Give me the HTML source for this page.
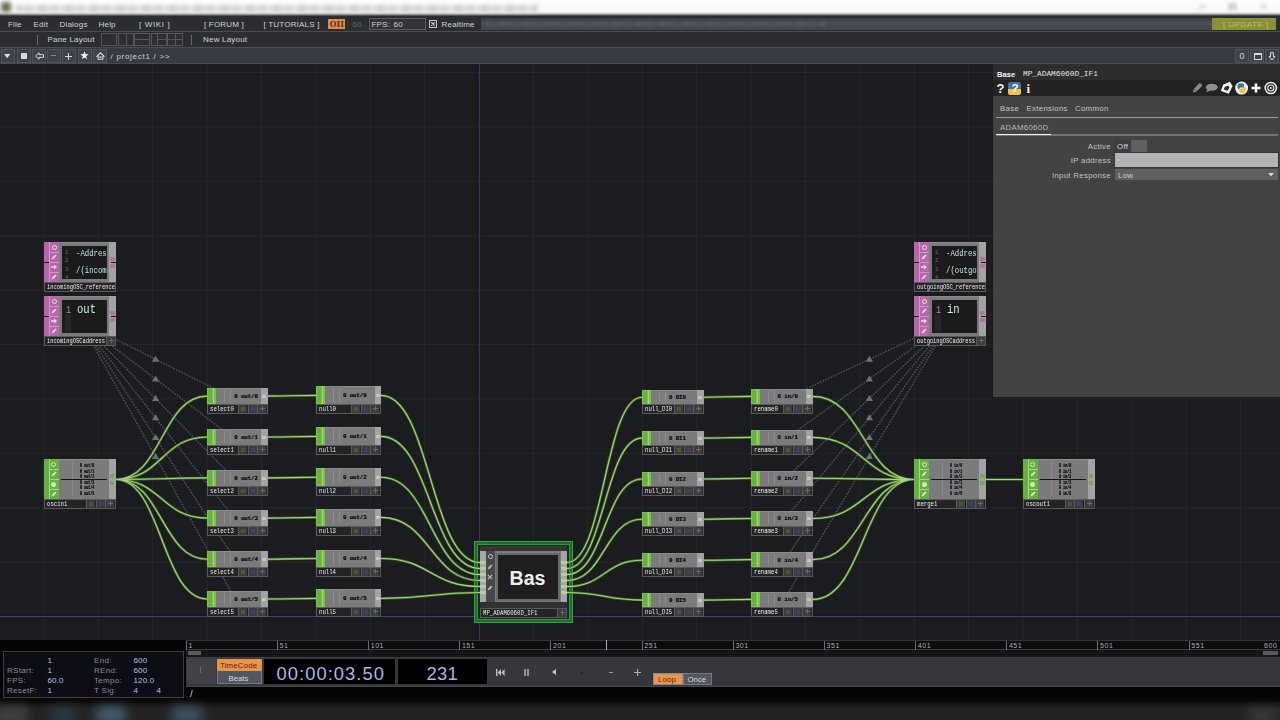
<!DOCTYPE html><html><head><meta charset="utf-8"><title>TouchDesigner</title><style>
*{box-sizing:border-box;margin:0;padding:0}
html,body{width:1280px;height:720px;overflow:hidden;background:#1b1c20}
body{font-family:"Liberation Sans",sans-serif;position:relative;color:#ccc}
.abs{position:absolute}
#root{position:absolute;left:0;top:0;width:1280px;height:720px;overflow:hidden;background:#1b1c20}
.t{position:absolute;white-space:nowrap;line-height:1}
.mono{font-family:"Liberation Mono",monospace}.sx{transform-origin:0 0}
/* top bars */
#titlebar{left:0;top:0;width:1280px;height:16px;overflow:hidden;background:linear-gradient(#fdfdfd 0,#f8f8f8 11.5px,#e0e0e0 13px,#8a8a8c 14.6px,#2c2d31 16px)}
#menubar{left:0;top:16px;width:1280px;height:16px;background:#2c2d31;border-bottom:1px solid #4c4d53}
#panebar{left:0;top:32px;width:1280px;height:16px;background:#2c2d31;border-bottom:1px solid #4c4d53}
#pathbar{left:0;top:48px;width:1280px;height:16px;background:#383a41;border-bottom:1px solid #484a53}
.mi{font-size:8px;color:#d4d4d4;top:4.7px;letter-spacing:.2px}
.pb{position:absolute;top:.5px;height:14px;width:13px;border:1px solid #50535b;background:#3f4249}
/* nodes */
.node{position:absolute}
.chop .flag{position:absolute;left:0;top:0;width:9px;background:#78c24c}
.nbody{position:absolute;background:#7b7b7b}
.nright{position:absolute;background:#a3a3a3}
.nlabel{position:absolute;left:0;height:10px;border:1px solid #5a5a5a;background:#242427;overflow:hidden}
.nlabel .nm{position:absolute;left:2px;top:1.3px;font-family:"Liberation Mono",monospace;font-size:7px;color:#ececec;line-height:7px;white-space:nowrap;transform-origin:0 0;transform:scaleX(.83);display:block}
.nb{position:absolute;top:0;width:9px;height:8px;border-left:1px solid #5a5a5a;background:#3c3c3e}
.nb i{position:absolute;left:2px;top:2px;width:4px;height:4px;display:block}
.val{position:absolute;font-family:"Liberation Mono",monospace;font-weight:bold;font-size:5.6px;color:#101010;line-height:6px;white-space:nowrap;text-shadow:0 0 .6px #222}

/* param panel */
#pp{left:993px;top:64px;width:287px;height:332.5px;background:#434343}
#pphead{left:0;top:0;width:287px;height:32.2px;background:linear-gradient(#2d2d2d 0,#2d2d2d 15.5px,#232323 16.5px,#232323 100%)}
.pl{font-size:7.8px;color:#c4c4c4;letter-spacing:.32px}
/* timeline */
#tl{left:0;top:640px;width:1280px;height:58px;background:#050404}
#tlinfo{left:2.5px;top:11px;width:181px;height:46.5px;border:1px solid #3e3e42;background:#0d0d15}
.il{font-size:8px;color:#8c8c8c;letter-spacing:.3px}
.iv{font-size:8px;color:#b4c0ee;letter-spacing:.15px}
#ruler{left:186px;top:0;width:1094px;height:9.5px;background:#0c0c0e;border-bottom:1px solid #3c3c40;border-top:1px solid #35353a}
.rt{position:absolute;top:0;width:1px;height:9px;background:#6e6e70}
.rn{position:absolute;top:.7px;font-size:7px;color:#b0b0b0;line-height:7px;letter-spacing:.55px}
#tlscroll{left:186px;top:9.5px;width:1094px;height:7px;background:#151517}
#tlctl{left:186px;top:16.5px;width:1094px;height:30.5px;background:#36373b;border-bottom:1px solid #46474a;border-top:1px solid #3e3f43}#tlctl>div.in{position:absolute;left:0;top:-2.5px}
#taskbar{left:0;top:697.5px;width:1280px;height:22.5px;overflow:hidden;background:linear-gradient(#0a0605 0,#0c0807 3px,#191818 7px,#212121 11px,#232323 22px)}
</style></head><body><div id="root"><svg class="abs" style="left:0;top:64px" width="1280" height="576" viewBox="0 64 1280 576"><rect x="43.3" y="64" width="1" height="576" fill="#25262c"/><rect x="97.7" y="64" width="1" height="576" fill="#25262c"/><rect x="152.1" y="64" width="1" height="576" fill="#25262c"/><rect x="206.5" y="64" width="1" height="576" fill="#25262c"/><rect x="260.9" y="64" width="1" height="576" fill="#25262c"/><rect x="315.3" y="64" width="1" height="576" fill="#25262c"/><rect x="369.7" y="64" width="1" height="576" fill="#25262c"/><rect x="424.1" y="64" width="1" height="576" fill="#25262c"/><rect x="532.9" y="64" width="1" height="576" fill="#25262c"/><rect x="587.3" y="64" width="1" height="576" fill="#25262c"/><rect x="641.7" y="64" width="1" height="576" fill="#25262c"/><rect x="696.1" y="64" width="1" height="576" fill="#25262c"/><rect x="750.5" y="64" width="1" height="576" fill="#25262c"/><rect x="804.9" y="64" width="1" height="576" fill="#25262c"/><rect x="859.3" y="64" width="1" height="576" fill="#25262c"/><rect x="913.7" y="64" width="1" height="576" fill="#25262c"/><rect x="968.1" y="64" width="1" height="576" fill="#25262c"/><rect x="1022.5" y="64" width="1" height="576" fill="#25262c"/><rect x="1076.9" y="64" width="1" height="576" fill="#25262c"/><rect x="1131.3" y="64" width="1" height="576" fill="#25262c"/><rect x="1185.7" y="64" width="1" height="576" fill="#25262c"/><rect x="1240.1" y="64" width="1" height="576" fill="#25262c"/><rect x="0" y="72.0" width="1280" height="1" fill="#25262c"/><rect x="0" y="126.4" width="1280" height="1" fill="#25262c"/><rect x="0" y="180.8" width="1280" height="1" fill="#25262c"/><rect x="0" y="235.2" width="1280" height="1" fill="#25262c"/><rect x="0" y="289.6" width="1280" height="1" fill="#25262c"/><rect x="0" y="344.0" width="1280" height="1" fill="#25262c"/><rect x="0" y="398.4" width="1280" height="1" fill="#25262c"/><rect x="0" y="452.8" width="1280" height="1" fill="#25262c"/><rect x="0" y="507.2" width="1280" height="1" fill="#25262c"/><rect x="0" y="561.6" width="1280" height="1" fill="#25262c"/><rect x="476.8" y="64" width="3.4" height="576" fill="#14132c" opacity=".55"/><rect x="0" y="614.7" width="1280" height="3.6" fill="#14132c" opacity=".55"/><rect x="478.8" y="64" width="1.1" height="576" fill="#3d3d52"/><rect x="0" y="616.0" width="1280" height="1.1" fill="#44445e"/></svg><div class="abs" style="left:474px;top:540.5px;width:98.5px;height:82px;background:#1f6a2c;border:1.2px solid #35a544"></div><div class="abs" style="left:477px;top:543.5px;width:92.5px;height:76px;background:#1a2a1e;border:1px solid #2f9a3c"></div><svg class="abs" style="left:0;top:64px" width="1280" height="576" viewBox="0 64 1280 576" fill="none"><path d="M80.0 321.5L237.5 400.2M950.0 321.5L782.0 400.2M80.0 321.5L237.5 441.2M950.0 321.5L782.0 441.2M80.0 321.5L237.5 482.1M950.0 321.5L782.0 482.1M80.0 321.5L237.5 522.3M950.0 321.5L782.0 522.3M80.0 321.5L237.5 563.4M950.0 321.5L782.0 563.4M80.0 321.5L237.5 603.2M950.0 321.5L782.0 603.2" stroke="#4c5058" stroke-width="1.55" stroke-dasharray="1.6 1.3"/><path d="M155.6 355.7L159.2 361.7L152.0 361.7Z" fill="#6a717d"/><path d="M869.4 355.7L873.0 361.7L865.8 361.7Z" fill="#6a717d"/><path d="M155.6 375.4L159.2 381.4L152.0 381.4Z" fill="#6a717d"/><path d="M869.4 375.4L873.0 381.4L865.8 381.4Z" fill="#6a717d"/><path d="M155.6 395.0L159.2 401.0L152.0 401.0Z" fill="#6a717d"/><path d="M869.4 395.0L873.0 401.0L865.8 401.0Z" fill="#6a717d"/><path d="M155.6 414.3L159.2 420.3L152.0 420.3Z" fill="#6a717d"/><path d="M869.4 414.3L873.0 420.3L865.8 420.3Z" fill="#6a717d"/><path d="M155.6 434.0L159.2 440.0L152.0 440.0Z" fill="#6a717d"/><path d="M869.4 434.0L873.0 440.0L865.8 440.0Z" fill="#6a717d"/><path d="M155.6 453.1L159.2 459.1L152.0 459.1Z" fill="#6a717d"/><path d="M869.4 453.1L873.0 459.1L865.8 459.1Z" fill="#6a717d"/><path d="M116.0 479.5C161.7 479.5 161.7 396.1 207.3 396.1M267.8 396.1C291.9 396.1 291.9 395.4 316.0 395.4M381.0 395.4C430.5 395.4 430.5 562.5 480.0 562.5M567.0 562.5C604.5 562.5 604.5 397.2 642.0 397.2M703.7 397.2C727.2 397.2 727.2 396.4 750.6 396.4M813.0 396.4C863.5 396.4 863.5 479.5 914.0 479.5M116.0 479.5C161.7 479.5 161.7 437.0 207.3 437.0M267.8 437.0C291.9 437.0 291.9 436.4 316.0 436.4M381.0 436.4C430.5 436.4 430.5 568.5 480.0 568.5M567.0 568.5C604.5 568.5 604.5 438.1 642.0 438.1M703.7 438.1C727.2 438.1 727.2 437.4 750.6 437.4M813.0 437.4C863.5 437.4 863.5 479.5 914.0 479.5M116.0 479.5C161.7 479.5 161.7 477.9 207.3 477.9M267.8 477.9C291.9 477.9 291.9 477.3 316.0 477.3M381.0 477.3C430.5 477.3 430.5 574.5 480.0 574.5M567.0 574.5C604.5 574.5 604.5 479.0 642.0 479.0M703.7 479.0C727.2 479.0 727.2 478.3 750.6 478.3M813.0 478.3C863.5 478.3 863.5 479.5 914.0 479.5M116.0 479.5C161.7 479.5 161.7 518.1 207.3 518.1M267.8 518.1C291.9 518.1 291.9 517.4 316.0 517.4M381.0 517.4C430.5 517.4 430.5 580.5 480.0 580.5M567.0 580.5C604.5 580.5 604.5 519.2 642.0 519.2M703.7 519.2C727.2 519.2 727.2 518.5 750.6 518.5M813.0 518.5C863.5 518.5 863.5 479.5 914.0 479.5M116.0 479.5C161.7 479.5 161.7 559.2 207.3 559.2M267.8 559.2C291.9 559.2 291.9 558.5 316.0 558.5M381.0 558.5C430.5 558.5 430.5 586.5 480.0 586.5M567.0 586.5C604.5 586.5 604.5 560.3 642.0 560.3M703.7 560.3C727.2 560.3 727.2 559.6 750.6 559.6M813.0 559.6C863.5 559.6 863.5 479.5 914.0 479.5M116.0 479.5C161.7 479.5 161.7 599.0 207.3 599.0M267.8 599.0C291.9 599.0 291.9 598.4 316.0 598.4M381.0 598.4C430.5 598.4 430.5 592.5 480.0 592.5M567.0 592.5C604.5 592.5 604.5 600.1 642.0 600.1M703.7 600.1C727.2 600.1 727.2 599.4 750.6 599.4M813.0 599.4C863.5 599.4 863.5 479.5 914.0 479.5M985.5 479.5C1004.0 479.5 1004.0 479.5 1022.5 479.5" stroke="#416c27" stroke-width="2.5" stroke-linecap="round"/><path d="M116.0 479.5C161.7 479.5 161.7 396.1 207.3 396.1M267.8 396.1C291.9 396.1 291.9 395.4 316.0 395.4M381.0 395.4C430.5 395.4 430.5 562.5 480.0 562.5M567.0 562.5C604.5 562.5 604.5 397.2 642.0 397.2M703.7 397.2C727.2 397.2 727.2 396.4 750.6 396.4M813.0 396.4C863.5 396.4 863.5 479.5 914.0 479.5M116.0 479.5C161.7 479.5 161.7 437.0 207.3 437.0M267.8 437.0C291.9 437.0 291.9 436.4 316.0 436.4M381.0 436.4C430.5 436.4 430.5 568.5 480.0 568.5M567.0 568.5C604.5 568.5 604.5 438.1 642.0 438.1M703.7 438.1C727.2 438.1 727.2 437.4 750.6 437.4M813.0 437.4C863.5 437.4 863.5 479.5 914.0 479.5M116.0 479.5C161.7 479.5 161.7 477.9 207.3 477.9M267.8 477.9C291.9 477.9 291.9 477.3 316.0 477.3M381.0 477.3C430.5 477.3 430.5 574.5 480.0 574.5M567.0 574.5C604.5 574.5 604.5 479.0 642.0 479.0M703.7 479.0C727.2 479.0 727.2 478.3 750.6 478.3M813.0 478.3C863.5 478.3 863.5 479.5 914.0 479.5M116.0 479.5C161.7 479.5 161.7 518.1 207.3 518.1M267.8 518.1C291.9 518.1 291.9 517.4 316.0 517.4M381.0 517.4C430.5 517.4 430.5 580.5 480.0 580.5M567.0 580.5C604.5 580.5 604.5 519.2 642.0 519.2M703.7 519.2C727.2 519.2 727.2 518.5 750.6 518.5M813.0 518.5C863.5 518.5 863.5 479.5 914.0 479.5M116.0 479.5C161.7 479.5 161.7 559.2 207.3 559.2M267.8 559.2C291.9 559.2 291.9 558.5 316.0 558.5M381.0 558.5C430.5 558.5 430.5 586.5 480.0 586.5M567.0 586.5C604.5 586.5 604.5 560.3 642.0 560.3M703.7 560.3C727.2 560.3 727.2 559.6 750.6 559.6M813.0 559.6C863.5 559.6 863.5 479.5 914.0 479.5M116.0 479.5C161.7 479.5 161.7 599.0 207.3 599.0M267.8 599.0C291.9 599.0 291.9 598.4 316.0 598.4M381.0 598.4C430.5 598.4 430.5 592.5 480.0 592.5M567.0 592.5C604.5 592.5 604.5 600.1 642.0 600.1M703.7 600.1C727.2 600.1 727.2 599.4 750.6 599.4M813.0 599.4C863.5 599.4 863.5 479.5 914.0 479.5M985.5 479.5C1004.0 479.5 1004.0 479.5 1022.5 479.5" stroke="#a8d27c" stroke-width="1.1" stroke-linecap="round"/></svg><div class="node chop" style="left:207.3px;top:387.8px;width:60.5px;height:26.0px"><div class="flag" style="height:16.0px"></div><div class="abs" style="left:1px;top:1px;width:4px;height:14.0px;background:#6ab040"></div><div class="abs" style="left:6px;top:0;width:1px;height:16.0px;background:#9ad86a"></div><div class="nbody" style="left:9px;top:0;width:45.0px;height:16.0px;border-top:1px solid #8a8a8a"></div><div class="abs" style="left:17px;top:2px;width:1px;height:12.0px;background:#8d8d8d"></div><div class="abs" style="left:23px;top:2px;width:1px;height:12.0px;background:#8d8d8d"></div><div class="val" style="left:27px;top:6.0px">0 out/0</div><div class="nright" style="left:54.0px;top:0;width:6.5px;height:16.0px"></div><div class="abs" style="left:55.0px;top:7.0px;width:4px;height:3px;background:#c4c4c4"></div><div class="nlabel" style="top:16.0px;width:60.5px"><span class="nm" style="transform:scaleX(0.810)">select0</span><div class="nb" style="left:29.7px"><i style="background:#48593a"></i></div><div class="nb" style="left:39.3px"><i style="background:#39446a"></i></div><div class="nb" style="left:48.9px"><i style="left:2px;top:3px;width:5px;height:1px;background:#6a6a6a"></i><i style="left:4px;top:1px;width:1px;height:5px;background:#6a6a6a"></i></div></div></div><div class="node chop" style="left:316.0px;top:386.4px;width:65.0px;height:27.3px"><div class="flag" style="height:17.3px"></div><div class="abs" style="left:1px;top:1px;width:4px;height:15.3px;background:#6ab040"></div><div class="abs" style="left:6px;top:0;width:1px;height:17.3px;background:#9ad86a"></div><div class="nbody" style="left:9px;top:0;width:49.5px;height:17.3px;border-top:1px solid #8a8a8a"></div><div class="abs" style="left:17px;top:2px;width:1px;height:13.3px;background:#8d8d8d"></div><div class="abs" style="left:23px;top:2px;width:1px;height:13.3px;background:#8d8d8d"></div><div class="val" style="left:27px;top:6.7px">0 out/0</div><div class="nright" style="left:58.5px;top:0;width:6.5px;height:17.3px"></div><div class="abs" style="left:59.5px;top:7.7px;width:4px;height:3px;background:#c4c4c4"></div><div class="nlabel" style="top:17.3px;width:65.0px"><span class="nm" style="transform:scaleX(0.810)">null0</span><div class="nb" style="left:34.2px"><i style="background:#48593a"></i></div><div class="nb" style="left:43.8px"><i style="background:#39446a"></i></div><div class="nb" style="left:53.4px"><i style="left:2px;top:3px;width:5px;height:1px;background:#6a6a6a"></i><i style="left:4px;top:1px;width:1px;height:5px;background:#6a6a6a"></i></div></div></div><div class="node chop" style="left:642.0px;top:389.9px;width:61.7px;height:23.8px"><div class="flag" style="height:13.8px"></div><div class="abs" style="left:1px;top:1px;width:4px;height:11.8px;background:#6ab040"></div><div class="abs" style="left:6px;top:0;width:1px;height:13.8px;background:#9ad86a"></div><div class="nbody" style="left:9px;top:0;width:46.2px;height:13.8px;border-top:1px solid #8a8a8a"></div><div class="abs" style="left:17px;top:2px;width:1px;height:9.8px;background:#8d8d8d"></div><div class="abs" style="left:23px;top:2px;width:1px;height:9.8px;background:#8d8d8d"></div><div class="val" style="left:27px;top:4.9px">0 DI0</div><div class="nright" style="left:55.2px;top:0;width:6.5px;height:13.8px"></div><div class="abs" style="left:56.2px;top:5.9px;width:4px;height:3px;background:#c4c4c4"></div><div class="nlabel" style="top:13.8px;width:61.7px"><span class="nm" style="transform:scaleX(0.810)">null_DI0</span><div class="nb" style="left:30.9px"><i style="background:#48593a"></i></div><div class="nb" style="left:40.5px"><i style="background:#39446a"></i></div><div class="nb" style="left:50.1px"><i style="left:2px;top:3px;width:5px;height:1px;background:#6a6a6a"></i><i style="left:4px;top:1px;width:1px;height:5px;background:#6a6a6a"></i></div></div></div><div class="node chop" style="left:750.6px;top:389.1px;width:62.4px;height:24.6px"><div class="flag" style="height:14.6px"></div><div class="abs" style="left:1px;top:1px;width:4px;height:12.6px;background:#6ab040"></div><div class="abs" style="left:6px;top:0;width:1px;height:14.6px;background:#9ad86a"></div><div class="nbody" style="left:9px;top:0;width:46.9px;height:14.6px;border-top:1px solid #8a8a8a"></div><div class="abs" style="left:17px;top:2px;width:1px;height:10.6px;background:#8d8d8d"></div><div class="abs" style="left:23px;top:2px;width:1px;height:10.6px;background:#8d8d8d"></div><div class="val" style="left:27px;top:5.3px">0 in/0</div><div class="nright" style="left:55.9px;top:0;width:6.5px;height:14.6px"></div><div class="abs" style="left:56.9px;top:6.3px;width:4px;height:3px;background:#c4c4c4"></div><div class="nlabel" style="top:14.6px;width:62.4px"><span class="nm" style="transform:scaleX(0.810)">rename0</span><div class="nb" style="left:31.6px"><i style="background:#48593a"></i></div><div class="nb" style="left:41.2px"><i style="background:#39446a"></i></div><div class="nb" style="left:50.8px"><i style="left:2px;top:3px;width:5px;height:1px;background:#6a6a6a"></i><i style="left:4px;top:1px;width:1px;height:5px;background:#6a6a6a"></i></div></div></div><div class="node chop" style="left:207.3px;top:428.7px;width:60.5px;height:26.0px"><div class="flag" style="height:16.0px"></div><div class="abs" style="left:1px;top:1px;width:4px;height:14.0px;background:#6ab040"></div><div class="abs" style="left:6px;top:0;width:1px;height:16.0px;background:#9ad86a"></div><div class="nbody" style="left:9px;top:0;width:45.0px;height:16.0px;border-top:1px solid #8a8a8a"></div><div class="abs" style="left:17px;top:2px;width:1px;height:12.0px;background:#8d8d8d"></div><div class="abs" style="left:23px;top:2px;width:1px;height:12.0px;background:#8d8d8d"></div><div class="val" style="left:27px;top:6.0px">0 out/1</div><div class="nright" style="left:54.0px;top:0;width:6.5px;height:16.0px"></div><div class="abs" style="left:55.0px;top:7.0px;width:4px;height:3px;background:#c4c4c4"></div><div class="nlabel" style="top:16.0px;width:60.5px"><span class="nm" style="transform:scaleX(0.810)">select1</span><div class="nb" style="left:29.7px"><i style="background:#48593a"></i></div><div class="nb" style="left:39.3px"><i style="background:#39446a"></i></div><div class="nb" style="left:48.9px"><i style="left:2px;top:3px;width:5px;height:1px;background:#6a6a6a"></i><i style="left:4px;top:1px;width:1px;height:5px;background:#6a6a6a"></i></div></div></div><div class="node chop" style="left:316.0px;top:427.4px;width:65.0px;height:27.3px"><div class="flag" style="height:17.3px"></div><div class="abs" style="left:1px;top:1px;width:4px;height:15.3px;background:#6ab040"></div><div class="abs" style="left:6px;top:0;width:1px;height:17.3px;background:#9ad86a"></div><div class="nbody" style="left:9px;top:0;width:49.5px;height:17.3px;border-top:1px solid #8a8a8a"></div><div class="abs" style="left:17px;top:2px;width:1px;height:13.3px;background:#8d8d8d"></div><div class="abs" style="left:23px;top:2px;width:1px;height:13.3px;background:#8d8d8d"></div><div class="val" style="left:27px;top:6.7px">0 out/1</div><div class="nright" style="left:58.5px;top:0;width:6.5px;height:17.3px"></div><div class="abs" style="left:59.5px;top:7.7px;width:4px;height:3px;background:#c4c4c4"></div><div class="nlabel" style="top:17.3px;width:65.0px"><span class="nm" style="transform:scaleX(0.810)">null1</span><div class="nb" style="left:34.2px"><i style="background:#48593a"></i></div><div class="nb" style="left:43.8px"><i style="background:#39446a"></i></div><div class="nb" style="left:53.4px"><i style="left:2px;top:3px;width:5px;height:1px;background:#6a6a6a"></i><i style="left:4px;top:1px;width:1px;height:5px;background:#6a6a6a"></i></div></div></div><div class="node chop" style="left:642.0px;top:430.9px;width:61.7px;height:23.8px"><div class="flag" style="height:13.8px"></div><div class="abs" style="left:1px;top:1px;width:4px;height:11.8px;background:#6ab040"></div><div class="abs" style="left:6px;top:0;width:1px;height:13.8px;background:#9ad86a"></div><div class="nbody" style="left:9px;top:0;width:46.2px;height:13.8px;border-top:1px solid #8a8a8a"></div><div class="abs" style="left:17px;top:2px;width:1px;height:9.8px;background:#8d8d8d"></div><div class="abs" style="left:23px;top:2px;width:1px;height:9.8px;background:#8d8d8d"></div><div class="val" style="left:27px;top:4.9px">0 DI1</div><div class="nright" style="left:55.2px;top:0;width:6.5px;height:13.8px"></div><div class="abs" style="left:56.2px;top:5.9px;width:4px;height:3px;background:#c4c4c4"></div><div class="nlabel" style="top:13.8px;width:61.7px"><span class="nm" style="transform:scaleX(0.810)">null_DI1</span><div class="nb" style="left:30.9px"><i style="background:#48593a"></i></div><div class="nb" style="left:40.5px"><i style="background:#39446a"></i></div><div class="nb" style="left:50.1px"><i style="left:2px;top:3px;width:5px;height:1px;background:#6a6a6a"></i><i style="left:4px;top:1px;width:1px;height:5px;background:#6a6a6a"></i></div></div></div><div class="node chop" style="left:750.6px;top:430.1px;width:62.4px;height:24.6px"><div class="flag" style="height:14.6px"></div><div class="abs" style="left:1px;top:1px;width:4px;height:12.6px;background:#6ab040"></div><div class="abs" style="left:6px;top:0;width:1px;height:14.6px;background:#9ad86a"></div><div class="nbody" style="left:9px;top:0;width:46.9px;height:14.6px;border-top:1px solid #8a8a8a"></div><div class="abs" style="left:17px;top:2px;width:1px;height:10.6px;background:#8d8d8d"></div><div class="abs" style="left:23px;top:2px;width:1px;height:10.6px;background:#8d8d8d"></div><div class="val" style="left:27px;top:5.3px">0 in/1</div><div class="nright" style="left:55.9px;top:0;width:6.5px;height:14.6px"></div><div class="abs" style="left:56.9px;top:6.3px;width:4px;height:3px;background:#c4c4c4"></div><div class="nlabel" style="top:14.6px;width:62.4px"><span class="nm" style="transform:scaleX(0.810)">rename1</span><div class="nb" style="left:31.6px"><i style="background:#48593a"></i></div><div class="nb" style="left:41.2px"><i style="background:#39446a"></i></div><div class="nb" style="left:50.8px"><i style="left:2px;top:3px;width:5px;height:1px;background:#6a6a6a"></i><i style="left:4px;top:1px;width:1px;height:5px;background:#6a6a6a"></i></div></div></div><div class="node chop" style="left:207.3px;top:469.6px;width:60.5px;height:26.0px"><div class="flag" style="height:16.0px"></div><div class="abs" style="left:1px;top:1px;width:4px;height:14.0px;background:#6ab040"></div><div class="abs" style="left:6px;top:0;width:1px;height:16.0px;background:#9ad86a"></div><div class="nbody" style="left:9px;top:0;width:45.0px;height:16.0px;border-top:1px solid #8a8a8a"></div><div class="abs" style="left:17px;top:2px;width:1px;height:12.0px;background:#8d8d8d"></div><div class="abs" style="left:23px;top:2px;width:1px;height:12.0px;background:#8d8d8d"></div><div class="val" style="left:27px;top:6.0px">0 out/2</div><div class="nright" style="left:54.0px;top:0;width:6.5px;height:16.0px"></div><div class="abs" style="left:55.0px;top:7.0px;width:4px;height:3px;background:#c4c4c4"></div><div class="nlabel" style="top:16.0px;width:60.5px"><span class="nm" style="transform:scaleX(0.810)">select2</span><div class="nb" style="left:29.7px"><i style="background:#48593a"></i></div><div class="nb" style="left:39.3px"><i style="background:#39446a"></i></div><div class="nb" style="left:48.9px"><i style="left:2px;top:3px;width:5px;height:1px;background:#6a6a6a"></i><i style="left:4px;top:1px;width:1px;height:5px;background:#6a6a6a"></i></div></div></div><div class="node chop" style="left:316.0px;top:468.3px;width:65.0px;height:27.3px"><div class="flag" style="height:17.3px"></div><div class="abs" style="left:1px;top:1px;width:4px;height:15.3px;background:#6ab040"></div><div class="abs" style="left:6px;top:0;width:1px;height:17.3px;background:#9ad86a"></div><div class="nbody" style="left:9px;top:0;width:49.5px;height:17.3px;border-top:1px solid #8a8a8a"></div><div class="abs" style="left:17px;top:2px;width:1px;height:13.3px;background:#8d8d8d"></div><div class="abs" style="left:23px;top:2px;width:1px;height:13.3px;background:#8d8d8d"></div><div class="val" style="left:27px;top:6.7px">0 out/2</div><div class="nright" style="left:58.5px;top:0;width:6.5px;height:17.3px"></div><div class="abs" style="left:59.5px;top:7.7px;width:4px;height:3px;background:#c4c4c4"></div><div class="nlabel" style="top:17.3px;width:65.0px"><span class="nm" style="transform:scaleX(0.810)">null2</span><div class="nb" style="left:34.2px"><i style="background:#48593a"></i></div><div class="nb" style="left:43.8px"><i style="background:#39446a"></i></div><div class="nb" style="left:53.4px"><i style="left:2px;top:3px;width:5px;height:1px;background:#6a6a6a"></i><i style="left:4px;top:1px;width:1px;height:5px;background:#6a6a6a"></i></div></div></div><div class="node chop" style="left:642.0px;top:471.8px;width:61.7px;height:23.8px"><div class="flag" style="height:13.8px"></div><div class="abs" style="left:1px;top:1px;width:4px;height:11.8px;background:#6ab040"></div><div class="abs" style="left:6px;top:0;width:1px;height:13.8px;background:#9ad86a"></div><div class="nbody" style="left:9px;top:0;width:46.2px;height:13.8px;border-top:1px solid #8a8a8a"></div><div class="abs" style="left:17px;top:2px;width:1px;height:9.8px;background:#8d8d8d"></div><div class="abs" style="left:23px;top:2px;width:1px;height:9.8px;background:#8d8d8d"></div><div class="val" style="left:27px;top:4.9px">0 DI2</div><div class="nright" style="left:55.2px;top:0;width:6.5px;height:13.8px"></div><div class="abs" style="left:56.2px;top:5.9px;width:4px;height:3px;background:#c4c4c4"></div><div class="nlabel" style="top:13.8px;width:61.7px"><span class="nm" style="transform:scaleX(0.810)">null_DI2</span><div class="nb" style="left:30.9px"><i style="background:#48593a"></i></div><div class="nb" style="left:40.5px"><i style="background:#39446a"></i></div><div class="nb" style="left:50.1px"><i style="left:2px;top:3px;width:5px;height:1px;background:#6a6a6a"></i><i style="left:4px;top:1px;width:1px;height:5px;background:#6a6a6a"></i></div></div></div><div class="node chop" style="left:750.6px;top:471.0px;width:62.4px;height:24.6px"><div class="flag" style="height:14.6px"></div><div class="abs" style="left:1px;top:1px;width:4px;height:12.6px;background:#6ab040"></div><div class="abs" style="left:6px;top:0;width:1px;height:14.6px;background:#9ad86a"></div><div class="nbody" style="left:9px;top:0;width:46.9px;height:14.6px;border-top:1px solid #8a8a8a"></div><div class="abs" style="left:17px;top:2px;width:1px;height:10.6px;background:#8d8d8d"></div><div class="abs" style="left:23px;top:2px;width:1px;height:10.6px;background:#8d8d8d"></div><div class="val" style="left:27px;top:5.3px">0 in/2</div><div class="nright" style="left:55.9px;top:0;width:6.5px;height:14.6px"></div><div class="abs" style="left:56.9px;top:6.3px;width:4px;height:3px;background:#c4c4c4"></div><div class="nlabel" style="top:14.6px;width:62.4px"><span class="nm" style="transform:scaleX(0.810)">rename2</span><div class="nb" style="left:31.6px"><i style="background:#48593a"></i></div><div class="nb" style="left:41.2px"><i style="background:#39446a"></i></div><div class="nb" style="left:50.8px"><i style="left:2px;top:3px;width:5px;height:1px;background:#6a6a6a"></i><i style="left:4px;top:1px;width:1px;height:5px;background:#6a6a6a"></i></div></div></div><div class="node chop" style="left:207.3px;top:509.8px;width:60.5px;height:26.0px"><div class="flag" style="height:16.0px"></div><div class="abs" style="left:1px;top:1px;width:4px;height:14.0px;background:#6ab040"></div><div class="abs" style="left:6px;top:0;width:1px;height:16.0px;background:#9ad86a"></div><div class="nbody" style="left:9px;top:0;width:45.0px;height:16.0px;border-top:1px solid #8a8a8a"></div><div class="abs" style="left:17px;top:2px;width:1px;height:12.0px;background:#8d8d8d"></div><div class="abs" style="left:23px;top:2px;width:1px;height:12.0px;background:#8d8d8d"></div><div class="val" style="left:27px;top:6.0px">0 out/3</div><div class="nright" style="left:54.0px;top:0;width:6.5px;height:16.0px"></div><div class="abs" style="left:55.0px;top:7.0px;width:4px;height:3px;background:#c4c4c4"></div><div class="nlabel" style="top:16.0px;width:60.5px"><span class="nm" style="transform:scaleX(0.810)">select3</span><div class="nb" style="left:29.7px"><i style="background:#48593a"></i></div><div class="nb" style="left:39.3px"><i style="background:#39446a"></i></div><div class="nb" style="left:48.9px"><i style="left:2px;top:3px;width:5px;height:1px;background:#6a6a6a"></i><i style="left:4px;top:1px;width:1px;height:5px;background:#6a6a6a"></i></div></div></div><div class="node chop" style="left:316.0px;top:508.5px;width:65.0px;height:27.3px"><div class="flag" style="height:17.3px"></div><div class="abs" style="left:1px;top:1px;width:4px;height:15.3px;background:#6ab040"></div><div class="abs" style="left:6px;top:0;width:1px;height:17.3px;background:#9ad86a"></div><div class="nbody" style="left:9px;top:0;width:49.5px;height:17.3px;border-top:1px solid #8a8a8a"></div><div class="abs" style="left:17px;top:2px;width:1px;height:13.3px;background:#8d8d8d"></div><div class="abs" style="left:23px;top:2px;width:1px;height:13.3px;background:#8d8d8d"></div><div class="val" style="left:27px;top:6.7px">0 out/3</div><div class="nright" style="left:58.5px;top:0;width:6.5px;height:17.3px"></div><div class="abs" style="left:59.5px;top:7.7px;width:4px;height:3px;background:#c4c4c4"></div><div class="nlabel" style="top:17.3px;width:65.0px"><span class="nm" style="transform:scaleX(0.810)">null3</span><div class="nb" style="left:34.2px"><i style="background:#48593a"></i></div><div class="nb" style="left:43.8px"><i style="background:#39446a"></i></div><div class="nb" style="left:53.4px"><i style="left:2px;top:3px;width:5px;height:1px;background:#6a6a6a"></i><i style="left:4px;top:1px;width:1px;height:5px;background:#6a6a6a"></i></div></div></div><div class="node chop" style="left:642.0px;top:512.0px;width:61.7px;height:23.8px"><div class="flag" style="height:13.8px"></div><div class="abs" style="left:1px;top:1px;width:4px;height:11.8px;background:#6ab040"></div><div class="abs" style="left:6px;top:0;width:1px;height:13.8px;background:#9ad86a"></div><div class="nbody" style="left:9px;top:0;width:46.2px;height:13.8px;border-top:1px solid #8a8a8a"></div><div class="abs" style="left:17px;top:2px;width:1px;height:9.8px;background:#8d8d8d"></div><div class="abs" style="left:23px;top:2px;width:1px;height:9.8px;background:#8d8d8d"></div><div class="val" style="left:27px;top:4.9px">0 DI3</div><div class="nright" style="left:55.2px;top:0;width:6.5px;height:13.8px"></div><div class="abs" style="left:56.2px;top:5.9px;width:4px;height:3px;background:#c4c4c4"></div><div class="nlabel" style="top:13.8px;width:61.7px"><span class="nm" style="transform:scaleX(0.810)">null_DI3</span><div class="nb" style="left:30.9px"><i style="background:#48593a"></i></div><div class="nb" style="left:40.5px"><i style="background:#39446a"></i></div><div class="nb" style="left:50.1px"><i style="left:2px;top:3px;width:5px;height:1px;background:#6a6a6a"></i><i style="left:4px;top:1px;width:1px;height:5px;background:#6a6a6a"></i></div></div></div><div class="node chop" style="left:750.6px;top:511.2px;width:62.4px;height:24.6px"><div class="flag" style="height:14.6px"></div><div class="abs" style="left:1px;top:1px;width:4px;height:12.6px;background:#6ab040"></div><div class="abs" style="left:6px;top:0;width:1px;height:14.6px;background:#9ad86a"></div><div class="nbody" style="left:9px;top:0;width:46.9px;height:14.6px;border-top:1px solid #8a8a8a"></div><div class="abs" style="left:17px;top:2px;width:1px;height:10.6px;background:#8d8d8d"></div><div class="abs" style="left:23px;top:2px;width:1px;height:10.6px;background:#8d8d8d"></div><div class="val" style="left:27px;top:5.3px">0 in/3</div><div class="nright" style="left:55.9px;top:0;width:6.5px;height:14.6px"></div><div class="abs" style="left:56.9px;top:6.3px;width:4px;height:3px;background:#c4c4c4"></div><div class="nlabel" style="top:14.6px;width:62.4px"><span class="nm" style="transform:scaleX(0.810)">rename3</span><div class="nb" style="left:31.6px"><i style="background:#48593a"></i></div><div class="nb" style="left:41.2px"><i style="background:#39446a"></i></div><div class="nb" style="left:50.8px"><i style="left:2px;top:3px;width:5px;height:1px;background:#6a6a6a"></i><i style="left:4px;top:1px;width:1px;height:5px;background:#6a6a6a"></i></div></div></div><div class="node chop" style="left:207.3px;top:550.9px;width:60.5px;height:26.0px"><div class="flag" style="height:16.0px"></div><div class="abs" style="left:1px;top:1px;width:4px;height:14.0px;background:#6ab040"></div><div class="abs" style="left:6px;top:0;width:1px;height:16.0px;background:#9ad86a"></div><div class="nbody" style="left:9px;top:0;width:45.0px;height:16.0px;border-top:1px solid #8a8a8a"></div><div class="abs" style="left:17px;top:2px;width:1px;height:12.0px;background:#8d8d8d"></div><div class="abs" style="left:23px;top:2px;width:1px;height:12.0px;background:#8d8d8d"></div><div class="val" style="left:27px;top:6.0px">0 out/4</div><div class="nright" style="left:54.0px;top:0;width:6.5px;height:16.0px"></div><div class="abs" style="left:55.0px;top:7.0px;width:4px;height:3px;background:#c4c4c4"></div><div class="nlabel" style="top:16.0px;width:60.5px"><span class="nm" style="transform:scaleX(0.810)">select4</span><div class="nb" style="left:29.7px"><i style="background:#48593a"></i></div><div class="nb" style="left:39.3px"><i style="background:#39446a"></i></div><div class="nb" style="left:48.9px"><i style="left:2px;top:3px;width:5px;height:1px;background:#6a6a6a"></i><i style="left:4px;top:1px;width:1px;height:5px;background:#6a6a6a"></i></div></div></div><div class="node chop" style="left:316.0px;top:549.6px;width:65.0px;height:27.3px"><div class="flag" style="height:17.3px"></div><div class="abs" style="left:1px;top:1px;width:4px;height:15.3px;background:#6ab040"></div><div class="abs" style="left:6px;top:0;width:1px;height:17.3px;background:#9ad86a"></div><div class="nbody" style="left:9px;top:0;width:49.5px;height:17.3px;border-top:1px solid #8a8a8a"></div><div class="abs" style="left:17px;top:2px;width:1px;height:13.3px;background:#8d8d8d"></div><div class="abs" style="left:23px;top:2px;width:1px;height:13.3px;background:#8d8d8d"></div><div class="val" style="left:27px;top:6.7px">0 out/4</div><div class="nright" style="left:58.5px;top:0;width:6.5px;height:17.3px"></div><div class="abs" style="left:59.5px;top:7.7px;width:4px;height:3px;background:#c4c4c4"></div><div class="nlabel" style="top:17.3px;width:65.0px"><span class="nm" style="transform:scaleX(0.810)">null4</span><div class="nb" style="left:34.2px"><i style="background:#48593a"></i></div><div class="nb" style="left:43.8px"><i style="background:#39446a"></i></div><div class="nb" style="left:53.4px"><i style="left:2px;top:3px;width:5px;height:1px;background:#6a6a6a"></i><i style="left:4px;top:1px;width:1px;height:5px;background:#6a6a6a"></i></div></div></div><div class="node chop" style="left:642.0px;top:553.1px;width:61.7px;height:23.8px"><div class="flag" style="height:13.8px"></div><div class="abs" style="left:1px;top:1px;width:4px;height:11.8px;background:#6ab040"></div><div class="abs" style="left:6px;top:0;width:1px;height:13.8px;background:#9ad86a"></div><div class="nbody" style="left:9px;top:0;width:46.2px;height:13.8px;border-top:1px solid #8a8a8a"></div><div class="abs" style="left:17px;top:2px;width:1px;height:9.8px;background:#8d8d8d"></div><div class="abs" style="left:23px;top:2px;width:1px;height:9.8px;background:#8d8d8d"></div><div class="val" style="left:27px;top:4.9px">0 DI4</div><div class="nright" style="left:55.2px;top:0;width:6.5px;height:13.8px"></div><div class="abs" style="left:56.2px;top:5.9px;width:4px;height:3px;background:#c4c4c4"></div><div class="nlabel" style="top:13.8px;width:61.7px"><span class="nm" style="transform:scaleX(0.810)">null_DI4</span><div class="nb" style="left:30.9px"><i style="background:#48593a"></i></div><div class="nb" style="left:40.5px"><i style="background:#39446a"></i></div><div class="nb" style="left:50.1px"><i style="left:2px;top:3px;width:5px;height:1px;background:#6a6a6a"></i><i style="left:4px;top:1px;width:1px;height:5px;background:#6a6a6a"></i></div></div></div><div class="node chop" style="left:750.6px;top:552.3px;width:62.4px;height:24.6px"><div class="flag" style="height:14.6px"></div><div class="abs" style="left:1px;top:1px;width:4px;height:12.6px;background:#6ab040"></div><div class="abs" style="left:6px;top:0;width:1px;height:14.6px;background:#9ad86a"></div><div class="nbody" style="left:9px;top:0;width:46.9px;height:14.6px;border-top:1px solid #8a8a8a"></div><div class="abs" style="left:17px;top:2px;width:1px;height:10.6px;background:#8d8d8d"></div><div class="abs" style="left:23px;top:2px;width:1px;height:10.6px;background:#8d8d8d"></div><div class="val" style="left:27px;top:5.3px">0 in/4</div><div class="nright" style="left:55.9px;top:0;width:6.5px;height:14.6px"></div><div class="abs" style="left:56.9px;top:6.3px;width:4px;height:3px;background:#c4c4c4"></div><div class="nlabel" style="top:14.6px;width:62.4px"><span class="nm" style="transform:scaleX(0.810)">rename4</span><div class="nb" style="left:31.6px"><i style="background:#48593a"></i></div><div class="nb" style="left:41.2px"><i style="background:#39446a"></i></div><div class="nb" style="left:50.8px"><i style="left:2px;top:3px;width:5px;height:1px;background:#6a6a6a"></i><i style="left:4px;top:1px;width:1px;height:5px;background:#6a6a6a"></i></div></div></div><div class="node chop" style="left:207.3px;top:590.7px;width:60.5px;height:26.0px"><div class="flag" style="height:16.0px"></div><div class="abs" style="left:1px;top:1px;width:4px;height:14.0px;background:#6ab040"></div><div class="abs" style="left:6px;top:0;width:1px;height:16.0px;background:#9ad86a"></div><div class="nbody" style="left:9px;top:0;width:45.0px;height:16.0px;border-top:1px solid #8a8a8a"></div><div class="abs" style="left:17px;top:2px;width:1px;height:12.0px;background:#8d8d8d"></div><div class="abs" style="left:23px;top:2px;width:1px;height:12.0px;background:#8d8d8d"></div><div class="val" style="left:27px;top:6.0px">0 out/5</div><div class="nright" style="left:54.0px;top:0;width:6.5px;height:16.0px"></div><div class="abs" style="left:55.0px;top:7.0px;width:4px;height:3px;background:#c4c4c4"></div><div class="nlabel" style="top:16.0px;width:60.5px"><span class="nm" style="transform:scaleX(0.810)">select5</span><div class="nb" style="left:29.7px"><i style="background:#48593a"></i></div><div class="nb" style="left:39.3px"><i style="background:#39446a"></i></div><div class="nb" style="left:48.9px"><i style="left:2px;top:3px;width:5px;height:1px;background:#6a6a6a"></i><i style="left:4px;top:1px;width:1px;height:5px;background:#6a6a6a"></i></div></div></div><div class="node chop" style="left:316.0px;top:589.4px;width:65.0px;height:27.3px"><div class="flag" style="height:17.3px"></div><div class="abs" style="left:1px;top:1px;width:4px;height:15.3px;background:#6ab040"></div><div class="abs" style="left:6px;top:0;width:1px;height:17.3px;background:#9ad86a"></div><div class="nbody" style="left:9px;top:0;width:49.5px;height:17.3px;border-top:1px solid #8a8a8a"></div><div class="abs" style="left:17px;top:2px;width:1px;height:13.3px;background:#8d8d8d"></div><div class="abs" style="left:23px;top:2px;width:1px;height:13.3px;background:#8d8d8d"></div><div class="val" style="left:27px;top:6.7px">0 out/5</div><div class="nright" style="left:58.5px;top:0;width:6.5px;height:17.3px"></div><div class="abs" style="left:59.5px;top:7.7px;width:4px;height:3px;background:#c4c4c4"></div><div class="nlabel" style="top:17.3px;width:65.0px"><span class="nm" style="transform:scaleX(0.810)">null5</span><div class="nb" style="left:34.2px"><i style="background:#48593a"></i></div><div class="nb" style="left:43.8px"><i style="background:#39446a"></i></div><div class="nb" style="left:53.4px"><i style="left:2px;top:3px;width:5px;height:1px;background:#6a6a6a"></i><i style="left:4px;top:1px;width:1px;height:5px;background:#6a6a6a"></i></div></div></div><div class="node chop" style="left:642.0px;top:592.9px;width:61.7px;height:23.8px"><div class="flag" style="height:13.8px"></div><div class="abs" style="left:1px;top:1px;width:4px;height:11.8px;background:#6ab040"></div><div class="abs" style="left:6px;top:0;width:1px;height:13.8px;background:#9ad86a"></div><div class="nbody" style="left:9px;top:0;width:46.2px;height:13.8px;border-top:1px solid #8a8a8a"></div><div class="abs" style="left:17px;top:2px;width:1px;height:9.8px;background:#8d8d8d"></div><div class="abs" style="left:23px;top:2px;width:1px;height:9.8px;background:#8d8d8d"></div><div class="val" style="left:27px;top:4.9px">0 DI5</div><div class="nright" style="left:55.2px;top:0;width:6.5px;height:13.8px"></div><div class="abs" style="left:56.2px;top:5.9px;width:4px;height:3px;background:#c4c4c4"></div><div class="nlabel" style="top:13.8px;width:61.7px"><span class="nm" style="transform:scaleX(0.810)">null_DI5</span><div class="nb" style="left:30.9px"><i style="background:#48593a"></i></div><div class="nb" style="left:40.5px"><i style="background:#39446a"></i></div><div class="nb" style="left:50.1px"><i style="left:2px;top:3px;width:5px;height:1px;background:#6a6a6a"></i><i style="left:4px;top:1px;width:1px;height:5px;background:#6a6a6a"></i></div></div></div><div class="node chop" style="left:750.6px;top:592.1px;width:62.4px;height:24.6px"><div class="flag" style="height:14.6px"></div><div class="abs" style="left:1px;top:1px;width:4px;height:12.6px;background:#6ab040"></div><div class="abs" style="left:6px;top:0;width:1px;height:14.6px;background:#9ad86a"></div><div class="nbody" style="left:9px;top:0;width:46.9px;height:14.6px;border-top:1px solid #8a8a8a"></div><div class="abs" style="left:17px;top:2px;width:1px;height:10.6px;background:#8d8d8d"></div><div class="abs" style="left:23px;top:2px;width:1px;height:10.6px;background:#8d8d8d"></div><div class="val" style="left:27px;top:5.3px">0 in/5</div><div class="nright" style="left:55.9px;top:0;width:6.5px;height:14.6px"></div><div class="abs" style="left:56.9px;top:6.3px;width:4px;height:3px;background:#c4c4c4"></div><div class="nlabel" style="top:14.6px;width:62.4px"><span class="nm" style="transform:scaleX(0.810)">rename5</span><div class="nb" style="left:31.6px"><i style="background:#48593a"></i></div><div class="nb" style="left:41.2px"><i style="background:#39446a"></i></div><div class="nb" style="left:50.8px"><i style="left:2px;top:3px;width:5px;height:1px;background:#6a6a6a"></i><i style="left:4px;top:1px;width:1px;height:5px;background:#6a6a6a"></i></div></div></div><div class="node" style="left:43.8px;top:459.0px;width:72px;height:50px"><div class="abs" style="left:0;top:0;width:15px;height:40.0px;background:#64b040"></div><div class="abs" style="left:5px;top:0;width:1px;height:40.0px;background:#9cde78"></div><div class="abs" style="left:7.7px;top:2.5px;width:5px;height:5px;border-radius:3px;border:1px solid #e0f4d0;opacity:.9"></div><div class="abs" style="left:5px;top:10.0px;width:10px;height:1px;background:#9cde78"></div><svg class="abs" style="left:7.2px;top:12.0px" width="6" height="6" viewBox="0 0 6 6"><path d="M0.5 5.5L1.5 3L4.5 0.5L5.5 1.5L3 4.5Z" fill="#f3e8f0" opacity=".9"/></svg><div class="abs" style="left:5px;top:20.0px;width:10px;height:1px;background:#9cde78"></div><div class="abs" style="left:7.7px;top:22.5px;width:5px;height:5px;border-radius:3px;background:#e0f4d0;opacity:.85"></div><div class="abs" style="left:5px;top:30.0px;width:10px;height:1px;background:#9cde78"></div><svg class="abs" style="left:7.2px;top:32.0px" width="6" height="6" viewBox="0 0 6 6"><path d="M0.5 5.5L1.5 3L4.5 0.5L5.5 1.5L3 4.5Z" fill="#f3e8f0" opacity=".9"/></svg><div class="nbody" style="left:15px;top:0;width:50.0px;height:40px;border-top:1px solid #8c8c8c"></div><div class="abs" style="left:28px;top:3px;width:1px;height:34px;background:#8a8a8a"></div><div class="abs" style="left:39.5px;top:4px;width:1px;height:32px;background:#848484"></div><div class="val sx" style="left:36px;top:5.0px;font-size:4.9px;line-height:4.4px;transform:scaleX(.7)">0 out/0</div><div class="val sx" style="left:36px;top:10.5px;font-size:4.9px;line-height:4.4px;transform:scaleX(.7)">0 out/1</div><div class="val sx" style="left:36px;top:16.1px;font-size:4.9px;line-height:4.4px;transform:scaleX(.7)">0 out/2</div><div class="val sx" style="left:36px;top:21.6px;font-size:4.9px;line-height:4.4px;transform:scaleX(.7)">0 out/3</div><div class="val sx" style="left:36px;top:27.1px;font-size:4.9px;line-height:4.4px;transform:scaleX(.7)">0 out/4</div><div class="val sx" style="left:36px;top:32.7px;font-size:4.9px;line-height:4.4px;transform:scaleX(.7)">0 out/5</div><div class="abs" style="left:17px;top:20px;width:46px;height:1px;background:#151515"></div><div class="nright" style="left:65px;top:0;width:7px;height:40px"></div><div class="abs" style="left:66.0px;top:15px;width:4.5px;height:4px;background:#76a85a"></div><div class="abs" style="left:66.0px;top:22px;width:4.5px;height:4px;background:#76a85a"></div><div class="nlabel" style="top:40.0px;width:72.0px"><span class="nm" style="transform:scaleX(0.810)">oscin1</span><div class="nb" style="left:41.2px"><i style="background:#48593a"></i></div><div class="nb" style="left:50.8px"><i style="background:#39446a"></i></div><div class="nb" style="left:60.4px"><i style="left:2px;top:3px;width:5px;height:1px;background:#6a6a6a"></i><i style="left:4px;top:1px;width:1px;height:5px;background:#6a6a6a"></i></div></div></div><div class="node" style="left:914.0px;top:459.0px;width:72px;height:50px"><div class="abs" style="left:0;top:0;width:15px;height:40.0px;background:#64b040"></div><div class="abs" style="left:5px;top:0;width:1px;height:40.0px;background:#9cde78"></div><div class="abs" style="left:7.7px;top:2.5px;width:5px;height:5px;border-radius:3px;border:1px solid #e0f4d0;opacity:.9"></div><div class="abs" style="left:5px;top:10.0px;width:10px;height:1px;background:#9cde78"></div><svg class="abs" style="left:7.2px;top:12.0px" width="6" height="6" viewBox="0 0 6 6"><path d="M0.5 5.5L1.5 3L4.5 0.5L5.5 1.5L3 4.5Z" fill="#f3e8f0" opacity=".9"/></svg><div class="abs" style="left:5px;top:20.0px;width:10px;height:1px;background:#9cde78"></div><div class="abs" style="left:7.7px;top:22.5px;width:5px;height:5px;border-radius:3px;background:#e0f4d0;opacity:.85"></div><div class="abs" style="left:5px;top:30.0px;width:10px;height:1px;background:#9cde78"></div><svg class="abs" style="left:7.2px;top:32.0px" width="6" height="6" viewBox="0 0 6 6"><path d="M0.5 5.5L1.5 3L4.5 0.5L5.5 1.5L3 4.5Z" fill="#f3e8f0" opacity=".9"/></svg><div class="nbody" style="left:15px;top:0;width:50.0px;height:40px;border-top:1px solid #8c8c8c"></div><div class="abs" style="left:28px;top:3px;width:1px;height:34px;background:#8a8a8a"></div><div class="abs" style="left:39.5px;top:4px;width:1px;height:32px;background:#848484"></div><div class="val sx" style="left:36px;top:5.0px;font-size:4.9px;line-height:4.4px;transform:scaleX(.7)">0 in/0</div><div class="val sx" style="left:36px;top:10.5px;font-size:4.9px;line-height:4.4px;transform:scaleX(.7)">0 in/1</div><div class="val sx" style="left:36px;top:16.1px;font-size:4.9px;line-height:4.4px;transform:scaleX(.7)">0 in/2</div><div class="val sx" style="left:36px;top:21.6px;font-size:4.9px;line-height:4.4px;transform:scaleX(.7)">0 in/3</div><div class="val sx" style="left:36px;top:27.1px;font-size:4.9px;line-height:4.4px;transform:scaleX(.7)">0 in/4</div><div class="val sx" style="left:36px;top:32.7px;font-size:4.9px;line-height:4.4px;transform:scaleX(.7)">0 in/5</div><div class="abs" style="left:17px;top:20px;width:46px;height:1px;background:#151515"></div><div class="nright" style="left:65px;top:0;width:7px;height:40px"></div><div class="abs" style="left:66.0px;top:15px;width:4.5px;height:4px;background:#76a85a"></div><div class="abs" style="left:66.0px;top:22px;width:4.5px;height:4px;background:#76a85a"></div><div class="nlabel" style="top:40.0px;width:72.0px"><span class="nm" style="transform:scaleX(0.810)">merge1</span><div class="nb" style="left:41.2px"><i style="background:#48593a"></i></div><div class="nb" style="left:50.8px"><i style="background:#39446a"></i></div><div class="nb" style="left:60.4px"><i style="left:2px;top:3px;width:5px;height:1px;background:#6a6a6a"></i><i style="left:4px;top:1px;width:1px;height:5px;background:#6a6a6a"></i></div></div></div><div class="node" style="left:1022.5px;top:459.0px;width:72px;height:50px"><div class="abs" style="left:0;top:0;width:15px;height:40.0px;background:#64b040"></div><div class="abs" style="left:5px;top:0;width:1px;height:40.0px;background:#9cde78"></div><div class="abs" style="left:7.7px;top:2.5px;width:5px;height:5px;border-radius:3px;border:1px solid #e0f4d0;opacity:.9"></div><div class="abs" style="left:5px;top:10.0px;width:10px;height:1px;background:#9cde78"></div><svg class="abs" style="left:7.2px;top:12.0px" width="6" height="6" viewBox="0 0 6 6"><path d="M0.5 5.5L1.5 3L4.5 0.5L5.5 1.5L3 4.5Z" fill="#f3e8f0" opacity=".9"/></svg><div class="abs" style="left:5px;top:20.0px;width:10px;height:1px;background:#9cde78"></div><div class="abs" style="left:7.7px;top:22.5px;width:5px;height:5px;border-radius:3px;background:#e0f4d0;opacity:.85"></div><div class="abs" style="left:5px;top:30.0px;width:10px;height:1px;background:#9cde78"></div><svg class="abs" style="left:7.2px;top:32.0px" width="6" height="6" viewBox="0 0 6 6"><path d="M0.5 5.5L1.5 3L4.5 0.5L5.5 1.5L3 4.5Z" fill="#f3e8f0" opacity=".9"/></svg><div class="nbody" style="left:15px;top:0;width:50.0px;height:40px;border-top:1px solid #8c8c8c"></div><div class="abs" style="left:28px;top:3px;width:1px;height:34px;background:#8a8a8a"></div><div class="abs" style="left:39.5px;top:4px;width:1px;height:32px;background:#848484"></div><div class="val sx" style="left:36px;top:5.0px;font-size:4.9px;line-height:4.4px;transform:scaleX(.7)">0 in/0</div><div class="val sx" style="left:36px;top:10.5px;font-size:4.9px;line-height:4.4px;transform:scaleX(.7)">0 in/1</div><div class="val sx" style="left:36px;top:16.1px;font-size:4.9px;line-height:4.4px;transform:scaleX(.7)">0 in/2</div><div class="val sx" style="left:36px;top:21.6px;font-size:4.9px;line-height:4.4px;transform:scaleX(.7)">0 in/3</div><div class="val sx" style="left:36px;top:27.1px;font-size:4.9px;line-height:4.4px;transform:scaleX(.7)">0 in/4</div><div class="val sx" style="left:36px;top:32.7px;font-size:4.9px;line-height:4.4px;transform:scaleX(.7)">0 in/5</div><div class="abs" style="left:17px;top:20px;width:46px;height:1px;background:#151515"></div><div class="nright" style="left:65px;top:0;width:7px;height:40px"></div><div class="abs" style="left:66.0px;top:15px;width:4.5px;height:4px;background:#76a85a"></div><div class="abs" style="left:66.0px;top:22px;width:4.5px;height:4px;background:#76a85a"></div><div class="nlabel" style="top:40.0px;width:72.0px"><span class="nm" style="transform:scaleX(0.810)">oscout1</span><div class="nb" style="left:41.2px"><i style="background:#48593a"></i></div><div class="nb" style="left:50.8px"><i style="background:#39446a"></i></div><div class="nb" style="left:60.4px"><i style="left:2px;top:3px;width:5px;height:1px;background:#6a6a6a"></i><i style="left:4px;top:1px;width:1px;height:5px;background:#6a6a6a"></i></div></div></div><div class="node" style="left:44.0px;top:242.0px;width:72px;height:50px"><div class="abs" style="left:0;top:0;width:15px;height:40.0px;background:#b766aa"></div><div class="abs" style="left:5px;top:0;width:1px;height:40.0px;background:#d596cb"></div><div class="abs" style="left:7.7px;top:2.5px;width:5px;height:5px;border-radius:3px;border:1px solid #e0f4d0;opacity:.9"></div><div class="abs" style="left:5px;top:10.0px;width:10px;height:1px;background:#d596cb"></div><svg class="abs" style="left:7.2px;top:12.0px" width="6" height="6" viewBox="0 0 6 6"><path d="M0.5 5.5L1.5 3L4.5 0.5L5.5 1.5L3 4.5Z" fill="#f3e8f0" opacity=".9"/></svg><div class="abs" style="left:5px;top:20.0px;width:10px;height:1px;background:#d596cb"></div><svg class="abs" style="left:7.2px;top:22.0px" width="6" height="6" viewBox="0 0 6 6"><path d="M0 2.2H3V0.5L6 3L3 5.5V3.8H0Z" fill="#f3e8f0" opacity=".9"/></svg><div class="abs" style="left:5px;top:30.0px;width:10px;height:1px;background:#d596cb"></div><svg class="abs" style="left:7.2px;top:32.0px" width="6" height="6" viewBox="0 0 6 6"><path d="M0.5 5.5L1.5 3L4.5 0.5L5.5 1.5L3 4.5Z" fill="#f3e8f0" opacity=".9"/></svg><div class="nbody" style="left:15px;top:0;width:50.0px;height:40px;border-top:1px solid #8c8c8c"></div><div class="abs" style="left:18px;top:3.5px;width:45px;height:33px;background:#1b1b1b;overflow:hidden"><div class="t mono" style="left:3px;top:4.0px;font-size:5.5px;color:#6e6e6e">1</div><div class="t mono" style="left:3px;top:12.6px;font-size:5.5px;color:#6e6e6e">2</div><div class="t mono" style="left:3px;top:21.2px;font-size:5.5px;color:#6e6e6e">3</div><div class="t mono" style="left:3px;top:29.8px;font-size:5.5px;color:#6e6e6e">4</div><div class="t mono sx" style="left:13.5px;top:4.3px;font-size:8.5px;color:#bfe8ea;transform:scaleX(.86)">-Addres</div><div class="t mono sx" style="left:13.5px;top:21.3px;font-size:8.5px;color:#bfe8ea;transform:scaleX(.86)">/(incom</div></div><div class="nright" style="left:65px;top:0;width:7px;height:40px"></div><div class="abs" style="left:66.0px;top:15px;width:4.5px;height:4px;background:#aa789f"></div><div class="abs" style="left:66.0px;top:22px;width:4.5px;height:4px;background:#aa789f"></div><div class="abs" style="left:-1px;top:20px;width:6px;height:1px;background:#111"></div><div class="abs" style="left:67px;top:20px;width:6px;height:1px;background:#111"></div><div class="nlabel" style="top:40.0px;width:72.0px"><span class="nm" style="transform:scaleX(0.771)">incomingOSC_reference</span></div></div><div class="node" style="left:44.0px;top:296.0px;width:72px;height:50px"><div class="abs" style="left:0;top:0;width:15px;height:40.0px;background:#b766aa"></div><div class="abs" style="left:5px;top:0;width:1px;height:40.0px;background:#d596cb"></div><div class="abs" style="left:7.7px;top:2.5px;width:5px;height:5px;border-radius:3px;border:1px solid #e0f4d0;opacity:.9"></div><div class="abs" style="left:5px;top:10.0px;width:10px;height:1px;background:#d596cb"></div><svg class="abs" style="left:7.2px;top:12.0px" width="6" height="6" viewBox="0 0 6 6"><path d="M0.5 5.5L1.5 3L4.5 0.5L5.5 1.5L3 4.5Z" fill="#f3e8f0" opacity=".9"/></svg><div class="abs" style="left:5px;top:20.0px;width:10px;height:1px;background:#d596cb"></div><svg class="abs" style="left:7.2px;top:22.0px" width="6" height="6" viewBox="0 0 6 6"><path d="M0 2.2H3V0.5L6 3L3 5.5V3.8H0Z" fill="#f3e8f0" opacity=".9"/></svg><div class="abs" style="left:5px;top:30.0px;width:10px;height:1px;background:#d596cb"></div><svg class="abs" style="left:7.2px;top:32.0px" width="6" height="6" viewBox="0 0 6 6"><path d="M0.5 5.5L1.5 3L4.5 0.5L5.5 1.5L3 4.5Z" fill="#f3e8f0" opacity=".9"/></svg><div class="nbody" style="left:15px;top:0;width:50.0px;height:40px;border-top:1px solid #8c8c8c"></div><div class="abs" style="left:18px;top:3.5px;width:45px;height:33px;background:#1b1b1b;overflow:hidden"><div class="t mono sx" style="left:3.5px;top:5px;font-size:10.5px;color:#a0a0a0;transform:scaleX(.8)">1</div><div class="t mono sx" style="left:14.5px;top:3px;font-size:13.5px;color:#c4eef0;transform:scaleX(.78)">out</div><div class="abs" style="left:3px;top:15px;width:6px;height:17px;background:#262626"></div></div><div class="nright" style="left:65px;top:0;width:7px;height:40px"></div><div class="abs" style="left:66.0px;top:15px;width:4.5px;height:4px;background:#aa789f"></div><div class="abs" style="left:66.0px;top:22px;width:4.5px;height:4px;background:#aa789f"></div><div class="abs" style="left:-1px;top:20px;width:6px;height:1px;background:#111"></div><div class="abs" style="left:67px;top:20px;width:6px;height:1px;background:#111"></div><div class="nlabel" style="top:40.0px;width:72.0px"><span class="nm" style="transform:scaleX(0.767)">incomingOSCaddress</span><div class="nb" style="left:61.0px"><i style="left:2px;top:3px;width:5px;height:1px;background:#6a6a6a"></i><i style="left:4px;top:1px;width:1px;height:5px;background:#6a6a6a"></i></div></div></div><div class="node" style="left:914.0px;top:242.0px;width:72px;height:50px"><div class="abs" style="left:0;top:0;width:15px;height:40.0px;background:#b766aa"></div><div class="abs" style="left:5px;top:0;width:1px;height:40.0px;background:#d596cb"></div><div class="abs" style="left:7.7px;top:2.5px;width:5px;height:5px;border-radius:3px;border:1px solid #e0f4d0;opacity:.9"></div><div class="abs" style="left:5px;top:10.0px;width:10px;height:1px;background:#d596cb"></div><svg class="abs" style="left:7.2px;top:12.0px" width="6" height="6" viewBox="0 0 6 6"><path d="M0.5 5.5L1.5 3L4.5 0.5L5.5 1.5L3 4.5Z" fill="#f3e8f0" opacity=".9"/></svg><div class="abs" style="left:5px;top:20.0px;width:10px;height:1px;background:#d596cb"></div><svg class="abs" style="left:7.2px;top:22.0px" width="6" height="6" viewBox="0 0 6 6"><path d="M0 2.2H3V0.5L6 3L3 5.5V3.8H0Z" fill="#f3e8f0" opacity=".9"/></svg><div class="abs" style="left:5px;top:30.0px;width:10px;height:1px;background:#d596cb"></div><svg class="abs" style="left:7.2px;top:32.0px" width="6" height="6" viewBox="0 0 6 6"><path d="M0.5 5.5L1.5 3L4.5 0.5L5.5 1.5L3 4.5Z" fill="#f3e8f0" opacity=".9"/></svg><div class="nbody" style="left:15px;top:0;width:50.0px;height:40px;border-top:1px solid #8c8c8c"></div><div class="abs" style="left:18px;top:3.5px;width:45px;height:33px;background:#1b1b1b;overflow:hidden"><div class="t mono" style="left:3px;top:4.0px;font-size:5.5px;color:#6e6e6e">1</div><div class="t mono" style="left:3px;top:12.6px;font-size:5.5px;color:#6e6e6e">2</div><div class="t mono" style="left:3px;top:21.2px;font-size:5.5px;color:#6e6e6e">3</div><div class="t mono" style="left:3px;top:29.8px;font-size:5.5px;color:#6e6e6e">4</div><div class="t mono sx" style="left:13.5px;top:4.3px;font-size:8.5px;color:#bfe8ea;transform:scaleX(.86)">-Addres</div><div class="t mono sx" style="left:13.5px;top:21.3px;font-size:8.5px;color:#bfe8ea;transform:scaleX(.86)">/(outgo</div></div><div class="nright" style="left:65px;top:0;width:7px;height:40px"></div><div class="abs" style="left:66.0px;top:15px;width:4.5px;height:4px;background:#aa789f"></div><div class="abs" style="left:66.0px;top:22px;width:4.5px;height:4px;background:#aa789f"></div><div class="abs" style="left:-1px;top:20px;width:6px;height:1px;background:#111"></div><div class="abs" style="left:67px;top:20px;width:6px;height:1px;background:#111"></div><div class="nlabel" style="top:40.0px;width:72.0px"><span class="nm" style="transform:scaleX(0.771)">outgoingOSC_reference</span></div></div><div class="node" style="left:914.0px;top:296.0px;width:72px;height:50px"><div class="abs" style="left:0;top:0;width:15px;height:40.0px;background:#b766aa"></div><div class="abs" style="left:5px;top:0;width:1px;height:40.0px;background:#d596cb"></div><div class="abs" style="left:7.7px;top:2.5px;width:5px;height:5px;border-radius:3px;border:1px solid #e0f4d0;opacity:.9"></div><div class="abs" style="left:5px;top:10.0px;width:10px;height:1px;background:#d596cb"></div><svg class="abs" style="left:7.2px;top:12.0px" width="6" height="6" viewBox="0 0 6 6"><path d="M0.5 5.5L1.5 3L4.5 0.5L5.5 1.5L3 4.5Z" fill="#f3e8f0" opacity=".9"/></svg><div class="abs" style="left:5px;top:20.0px;width:10px;height:1px;background:#d596cb"></div><svg class="abs" style="left:7.2px;top:22.0px" width="6" height="6" viewBox="0 0 6 6"><path d="M0 2.2H3V0.5L6 3L3 5.5V3.8H0Z" fill="#f3e8f0" opacity=".9"/></svg><div class="abs" style="left:5px;top:30.0px;width:10px;height:1px;background:#d596cb"></div><svg class="abs" style="left:7.2px;top:32.0px" width="6" height="6" viewBox="0 0 6 6"><path d="M0.5 5.5L1.5 3L4.5 0.5L5.5 1.5L3 4.5Z" fill="#f3e8f0" opacity=".9"/></svg><div class="nbody" style="left:15px;top:0;width:50.0px;height:40px;border-top:1px solid #8c8c8c"></div><div class="abs" style="left:18px;top:3.5px;width:45px;height:33px;background:#1b1b1b;overflow:hidden"><div class="t mono sx" style="left:3.5px;top:5px;font-size:10.5px;color:#a0a0a0;transform:scaleX(.8)">1</div><div class="t mono sx" style="left:14.5px;top:3px;font-size:13.5px;color:#c4eef0;transform:scaleX(.78)">in</div><div class="abs" style="left:3px;top:15px;width:6px;height:17px;background:#262626"></div></div><div class="nright" style="left:65px;top:0;width:7px;height:40px"></div><div class="abs" style="left:66.0px;top:15px;width:4.5px;height:4px;background:#aa789f"></div><div class="abs" style="left:66.0px;top:22px;width:4.5px;height:4px;background:#aa789f"></div><div class="abs" style="left:-1px;top:20px;width:6px;height:1px;background:#111"></div><div class="abs" style="left:67px;top:20px;width:6px;height:1px;background:#111"></div><div class="nlabel" style="top:40.0px;width:72.0px"><span class="nm" style="transform:scaleX(0.767)">outgoingOSCaddress</span><div class="nb" style="left:61.0px"><i style="left:2px;top:3px;width:5px;height:1px;background:#6a6a6a"></i><i style="left:4px;top:1px;width:1px;height:5px;background:#6a6a6a"></i></div></div></div><div class="node" style="left:479.5px;top:546px;width:87.5px;height:71px"><div class="abs" style="left:0;top:0;width:87.5px;height:5px;background:#353535"></div><div class="abs" style="left:0;top:5px;width:87.5px;height:51px;background:#7a7a7a"></div><div class="abs" style="left:0;top:5px;width:6px;height:51px;background:#a6a6a6"></div><div class="abs" style="left:81px;top:5px;width:6.5px;height:51px;background:#a6a6a6"></div><div class="abs" style="left:6px;top:5px;width:9px;height:51px;background:#474747"></div><div class="abs" style="left:0;top:15.0px;width:6px;height:3px;background:#b4cfa4"></div><div class="abs" style="left:81.5px;top:15.0px;width:6px;height:3px;background:#b4cfa4"></div><div class="abs" style="left:0;top:21.0px;width:6px;height:3px;background:#b4cfa4"></div><div class="abs" style="left:81.5px;top:21.0px;width:6px;height:3px;background:#b4cfa4"></div><div class="abs" style="left:0;top:27.0px;width:6px;height:3px;background:#b4cfa4"></div><div class="abs" style="left:81.5px;top:27.0px;width:6px;height:3px;background:#b4cfa4"></div><div class="abs" style="left:0;top:33.0px;width:6px;height:3px;background:#b4cfa4"></div><div class="abs" style="left:81.5px;top:33.0px;width:6px;height:3px;background:#b4cfa4"></div><div class="abs" style="left:0;top:39.0px;width:6px;height:3px;background:#b4cfa4"></div><div class="abs" style="left:81.5px;top:39.0px;width:6px;height:3px;background:#b4cfa4"></div><div class="abs" style="left:0;top:45.0px;width:6px;height:3px;background:#b4cfa4"></div><div class="abs" style="left:81.5px;top:45.0px;width:6px;height:3px;background:#b4cfa4"></div><div class="abs" style="left:8px;top:8px;width:5px;height:5px;border-radius:3px;border:1.2px solid #c4c4c4"></div><svg class="abs" style="left:7.5px;top:17.5px" width="6" height="6" viewBox="0 0 6 6"><path d="M0.5 5.5L1.5 3L4.5 0.5L5.5 1.5L3 4.5Z" fill="#bcbcbc"/></svg><svg class="abs" style="left:7.5px;top:28px" width="6" height="6" viewBox="0 0 6 6"><path d="M0.8 0.8L5.2 5.2M5.2 0.8L0.8 5.2" stroke="#bcbcbc" stroke-width="1.2"/></svg><svg class="abs" style="left:7.5px;top:38.5px" width="6" height="6" viewBox="0 0 6 6"><path d="M0.5 5.5L1.5 3L4.5 0.5L5.5 1.5L3 4.5Z" fill="#bcbcbc"/></svg><div class="abs" style="left:16px;top:6.5px;width:64px;height:48px;background:#686868"></div><div class="abs" style="left:18.5px;top:9px;width:60px;height:43.5px;background:#1e1e1e"></div><div class="t" style="left:30px;top:23.2px;font-size:19.6px;font-weight:bold;color:#f0f0f0">Bas</div><div class="abs" style="left:0;top:56px;width:87.5px;height:6.5px;background:#303030"></div><div class="nlabel" style="top:62.0px;width:87.5px"><span class="nm" style="transform:scaleX(0.810)">MP_ADAM6060D_IF1</span><div class="nb" style="left:76.5px"><i style="left:2px;top:3px;width:5px;height:1px;background:#6a6a6a"></i><i style="left:4px;top:1px;width:1px;height:5px;background:#6a6a6a"></i></div></div></div><div class="abs" id="titlebar"><div class="abs" style="left:1px;top:2px;width:10px;height:10px;background:#6a6e50;filter:blur(2px);border-radius:2px"></div><div class="abs" style="left:16px;top:4.5px;width:522px;height:7px;background:repeating-linear-gradient(90deg,#c4c4c4 0,#dedede 7px,#cacaca 13px,#e8e8e8 19px,#c4c4c4 26px);filter:blur(2.2px);opacity:.95"></div><div class="abs" style="left:1199px;top:4px;width:7px;height:5px;background:#e4e4e4;filter:blur(1.5px)"></div><div class="abs" style="left:1228px;top:3px;width:9px;height:7px;background:#d2d2d2;filter:blur(1.5px)"></div><div class="abs" style="left:1260px;top:4px;width:7px;height:5px;background:#e4e4e4;filter:blur(1.5px)"></div></div><div class="abs" id="menubar"><div class="t mi" style="left:8.0px">File</div><div class="t mi" style="left:33.5px">Edit</div><div class="t mi" style="left:59.5px">Dialogs</div><div class="t mi" style="left:98.5px">Help</div><div class="t mi" style="left:139.0px;letter-spacing:.65px">[ WIKI ]</div><div class="t mi" style="left:204.0px">[ FORUM ]</div><div class="t mi" style="left:263.5px">[ TUTORIALS ]</div><div class="abs" style="left:327.5px;top:2.6px;width:17.5px;height:10.2px;background:#d98b50"></div><div class="t" style="left:329.8px;top:3.9px;font-size:8.6px;font-weight:bold;color:#5a2810;letter-spacing:.3px;font-family:Liberation Serif,serif">OII</div><div class="t mi" style="left:352.5px;color:#6a6a6e">60</div><div class="abs" style="left:368.5px;top:2px;width:57px;height:12px;border:1px solid #5c5d63;background:#313238"></div><div class="t mi" style="left:371.5px">FPS:</div><div class="t mi" style="left:393.5px">60</div><div class="abs" style="left:429px;top:4px;width:8px;height:8px;border:1px solid #c8c8c8"></div><svg class="abs" style="left:431px;top:6px" width="4" height="4" viewBox="0 0 4 4"><path d="M0.3 0.3L3.7 3.7M3.7 0.3L0.3 3.7" stroke="#dcdcdc" stroke-width="1.1"/></svg><div class="t mi" style="left:441.5px">Realtime</div><div class="abs" style="left:481px;top:2px;width:731px;height:12px;background:linear-gradient(#3c3d44,#4a4c54 40%,#44464e)"></div><div class="abs" style="left:486px;top:6px;width:340px;height:4px;background:repeating-linear-gradient(90deg,#565a66 0,#4a4c58 9px,#5a5e6a 17px,#4c4e5a 23px);filter:blur(1.2px);opacity:.8"></div><div class="abs" style="left:1212px;top:2px;width:64px;height:12px;background:#8b9032"></div><div class="t mi" style="left:1223px;color:#b6bc7e;letter-spacing:.5px">[ UPDATE ]</div></div><div class="abs" id="panebar"><div class="abs" style="left:37px;top:3px;width:1px;height:10px;background:#6a6a6e"></div><div class="t mi" style="left:47.5px;top:4px">Pane Layout</div><div class="abs" style="left:101.0px;top:1px;width:16px;height:13px;border:1px solid #54565c"></div><div class="abs" style="left:117.5px;top:1px;width:16px;height:13px;border:1px solid #54565c"></div><div class="abs" style="left:125.5px;top:1px;width:1px;height:13px;background:#54565c"></div><div class="abs" style="left:134.0px;top:1px;width:16px;height:13px;border:1px solid #54565c"></div><div class="abs" style="left:134.0px;top:7px;width:16px;height:1px;background:#54565c"></div><div class="abs" style="left:150.5px;top:1px;width:16px;height:13px;border:1px solid #54565c"></div><div class="abs" style="left:156.5px;top:1px;width:1px;height:13px;background:#54565c"></div><div class="abs" style="left:156.5px;top:7px;width:10px;height:1px;background:#54565c"></div><div class="abs" style="left:167.0px;top:1px;width:16px;height:13px;border:1px solid #54565c"></div><div class="abs" style="left:175.0px;top:1px;width:1px;height:13px;background:#54565c"></div><div class="abs" style="left:167.0px;top:7px;width:16px;height:1px;background:#54565c"></div><div class="abs" style="left:190.5px;top:3px;width:1px;height:10px;background:#6a6a6e"></div><div class="t mi" style="left:203px;top:4px">New Layout</div></div><div class="abs" id="pathbar"><div class="pb" style="left:1.0px;width:14px"></div><div class="pb" style="left:16.5px;width:14px"></div><div class="pb" style="left:32.0px;width:14px"></div><div class="pb" style="left:47.0px;width:14px"></div><div class="pb" style="left:62.0px;width:14px"></div><div class="pb" style="left:77.5px;width:14px"></div><div class="pb" style="left:93.0px;width:14px"></div><svg class="abs" style="left:3.7px;top:6.2px" width="6.4" height="4.4" viewBox="0 0 7 5"><path d="M0 0H7L3.5 4.8Z" fill="#e0e0e0"/></svg><div class="abs" style="left:20.5px;top:4.5px;width:6.5px;height:6.5px;background:#d8d8e0"></div><svg class="abs" style="left:34.5px;top:4px" width="9" height="8" viewBox="0 0 9 8"><path d="M0.5 4L4 0.8V2.6H8.5V5.4H4V7.2Z" fill="none" stroke="#dcdcdc" stroke-width="1"/></svg><div class="abs" style="left:51px;top:7px;width:5px;height:1px;background:#85878e"></div><div class="abs" style="left:65px;top:8px;width:7px;height:1px;background:#d4d4d4"></div><div class="abs" style="left:68px;top:5px;width:1px;height:7px;background:#d4d4d4"></div><svg class="abs" style="left:80px;top:3.4px" width="9" height="9" viewBox="0 0 9 9"><path d="M4.50 0.20L5.59 3.10L8.68 3.24L6.26 5.17L7.09 8.16L4.50 6.45L1.91 8.16L2.74 5.17L0.32 3.24L3.41 3.10Z" fill="#ececec"/></svg><svg class="abs" style="left:95.5px;top:4px" width="9" height="8" viewBox="0 0 9 8"><path d="M1 4.2L4.5 0.8L8 4.2H6.8V7.2H2.2V4.2Z" fill="none" stroke="#dcdcdc" stroke-width="1.1"/><rect x="3.6" y="4.4" width="1.8" height="1.6" fill="#dcdcdc"/></svg><div class="t mi" style="left:110.5px;top:5px;letter-spacing:.72px">/ project1 / &gt;&gt;</div><div class="pb" style="left:1235px;width:14px"></div><div class="pb" style="left:1250px;width:14px"></div><div class="pb" style="left:1265px;width:14px"></div><div class="t mi" style="left:1239.5px;top:4px;font-size:9px">0</div><div class="abs" style="left:1253.5px;top:5px;width:8px;height:7px;border:1px solid #d8d8d8;border-top-width:2px"></div><svg class="abs" style="left:1268px;top:4px" width="8" height="9" viewBox="0 0 8 9"><path d="M2.6 0.6H5.4V4.6H7L4 8L1 4.6H2.6Z" fill="none" stroke="#dcdcdc" stroke-width="1"/></svg></div><div class="abs" id="pp"><div class="abs" id="pphead"></div><div class="t" style="left:4px;top:6.5px;font-size:7.6px;font-weight:bold;color:#f4f4f4">Base</div><div class="t mono" style="left:30px;top:7px;font-size:7.8px;color:#e4e4e4;letter-spacing:0">MP_ADAM6060D_IF1</div><div class="t" style="left:3.5px;top:17.5px;font-size:13px;font-weight:bold;color:#f4f4f4">?</div><div class="abs" style="left:15px;top:18px;width:13px;height:7px;background:#3c72a8;border-radius:2px 2px 0 0"></div><div class="abs" style="left:15px;top:24.5px;width:13px;height:6px;background:#f0c63c;border-radius:0 0 2px 2px"></div><div class="t" style="left:18.5px;top:18.5px;font-size:11.5px;font-weight:bold;color:#ffffff">?</div><div class="t" style="left:33.5px;top:17.5px;font-size:13px;font-weight:bold;color:#f4f4f4;font-family:'Liberation Serif',serif">i</div><svg class="abs" style="left:195px;top:14px" width="92" height="20" viewBox="1188 78 92 20"><path d="M1193 92.4L1193.7 89.3L1199 83.6Q1200.4 82.6 1201.5 83.9Q1202.6 85.2 1201.6 86.4L1196.2 91.8Z" fill="#8a8a8a"/><path d="M1194.6 89.6L1196.6 91.2" stroke="#2a2a2a" stroke-width=".7"/><ellipse cx="1211.8" cy="87.2" rx="6" ry="3.5" fill="#8e8e8e"/><path d="M1207.6 88.6L1206.3 92.2L1211 90.3Z" fill="#8e8e8e"/><path d="M1223.2 84.4L1228.4 82.6L1229.6 81.6L1232.6 86L1228.8 93.8L1220.8 91Z" fill="#f2f2f2"/><path d="M1224.9 86.7L1228.6 85.8L1229.4 87.5L1227.6 90.8L1223.9 89.6Z" fill="#262626"/><circle cx="1241.6" cy="88.1" r="6.5" fill="#f0f0f0"/><path d="M1238 84.6Q1238 83.2 1240 83.2H1242Q1244 83.2 1244 85V87.6H1240.5Q1239.6 87.6 1239.4 88.8L1239.2 89.6Q1237.4 89 1237.4 87Z" fill="#3a73ad"/><path d="M1245.2 91.4Q1245.2 92.9 1243.2 92.9H1241.2Q1239.4 92.9 1239.4 91.2V88.6H1242.8Q1243.8 88.6 1244 87.4L1244.2 86.4Q1245.9 87 1245.9 89Z" fill="#f1c43a"/><path d="M1251.5 86.7H1254.7V83.5H1257.3V86.7H1260.5V89.3H1257.3V92.5H1254.7V89.3H1251.5Z" fill="#f6f6f6"/><circle cx="1270.8" cy="88" r="5.6" fill="none" stroke="#f0f0f0" stroke-width="1.5"/><circle cx="1270.8" cy="88" r="3" fill="none" stroke="#f0f0f0" stroke-width="1.2"/><circle cx="1270.8" cy="88" r="1" fill="#f0f0f0"/></svg><div class="t pl" style="left:7px;top:41px">Base</div><div class="t pl" style="left:33.5px;top:41px">Extensions</div><div class="t pl" style="left:82px;top:41px">Common</div><div class="abs" style="left:3px;top:52.5px;width:282px;height:1px;background:#9c9c9c"></div><div class="t pl" style="left:7px;top:59.5px;color:#bcbcbc">ADAM6060D</div><div class="abs" style="left:3px;top:70px;width:282px;height:1.6px;background:#747474"></div><div class="abs" style="left:3px;top:69.5px;width:55px;height:1.6px;background:#f4f4f4"></div><div class="t pl" style="right:169px;top:78.7px">Active</div><div class="abs" style="left:121px;top:75.5px;width:16.5px;height:12px;background:#3e3e3e"></div><div class="t pl" style="left:124px;top:78.7px;color:#d8d8d8">Off</div><div class="abs" style="left:138px;top:75.5px;width:16px;height:12px;background:#606066"></div><div class="t pl" style="right:169px;top:93.3px">IP address</div><div class="abs" style="left:121.5px;top:89px;width:163px;height:13.7px;background:#b4b4b4;box-shadow:0 0 0 .8px #363636"></div><div class="t pl" style="right:169px;top:107.9px">Input Response</div><div class="abs" style="left:122px;top:104.8px;width:162.5px;height:11.7px;background:#606060"></div><div class="t pl" style="left:125px;top:107.9px;color:#cfcfcf">Low</div><svg class="abs" style="left:275.4px;top:109px" width="6.2" height="3.4" viewBox="0 0 7 4"><path d="M0 0H7L3.5 4Z" fill="#dcdcdc"/></svg></div><div class="abs" id="tl"><div class="abs" id="tlinfo"><div class="t iv" style="left:44px;top:5px">1</div><div class="t il" style="left:90.5px;top:5px">End:</div><div class="t iv" style="left:130px;top:5px">600</div><div class="t il" style="left:3.5px;top:15px">RStart:</div><div class="t iv" style="left:44px;top:15px">1</div><div class="t il" style="left:90.5px;top:15px">REnd:</div><div class="t iv" style="left:130px;top:15px">600</div><div class="t il" style="left:3.5px;top:25px">FPS:</div><div class="t iv" style="left:44px;top:25px">60.0</div><div class="t il" style="left:90.5px;top:25px">Tempo:</div><div class="t iv" style="left:130px;top:25px">120.0</div><div class="t il" style="left:3.5px;top:35px">ResetF:</div><div class="t iv" style="left:44px;top:35px">1</div><div class="t il" style="left:90.5px;top:35px">T Sig:</div><div class="t iv" style="left:130px;top:35px">4</div><div class="t iv" style="left:153px;top:35px">4</div></div><div class="abs" id="ruler"><div class="rt" style="left:-0.4px"></div><div class="rn" style="left:2.4px">1</div><div class="rt" style="left:90.8px"></div><div class="rn" style="left:93.6px">51</div><div class="rt" style="left:181.9px"></div><div class="rn" style="left:184.7px">101</div><div class="rt" style="left:273.1px"></div><div class="rn" style="left:275.9px">151</div><div class="rt" style="left:364.3px"></div><div class="rn" style="left:367.1px">201</div><div class="rt" style="left:455.5px"></div><div class="rn" style="left:458.3px">251</div><div class="rt" style="left:546.6px"></div><div class="rn" style="left:549.4px">301</div><div class="rt" style="left:637.8px"></div><div class="rn" style="left:640.6px">351</div><div class="rt" style="left:729.0px"></div><div class="rn" style="left:731.8px">401</div><div class="rt" style="left:820.1px"></div><div class="rn" style="left:822.9px">451</div><div class="rt" style="left:911.3px"></div><div class="rn" style="left:914.1px">501</div><div class="rt" style="left:1002.5px"></div><div class="rn" style="left:1005.3px">551</div><div class="rn" style="left:1078px">600</div><div class="abs" style="left:420px;top:-1px;width:1.4px;height:10px;background:#a8acd8"></div></div><div class="abs" id="tlscroll"><div class="abs" style="left:1.5px;top:1px;width:13.5px;height:4.5px;background:#5a5a5c"></div><div class="abs" style="left:1077px;top:1px;width:14.5px;height:4.5px;background:#5a5a5c"></div></div><div class="abs" id="tlctl"><div class="in"><div class="abs" style="left:1px;top:4px;width:29px;height:25px;background:#424246"></div><div class="abs" style="left:14px;top:12px;width:1px;height:6px;background:#6c6c70"></div><div class="abs" style="left:30.5px;top:3.5px;width:45.5px;height:12px;background:#e8944c;border-radius:1px"></div><div class="t" style="left:34px;top:6.5px;font-size:7.8px;color:#6a1c10;letter-spacing:.2px">TimeCode</div><div class="abs" style="left:30.5px;top:15.5px;width:45.5px;height:13px;background:#525660;border:1px solid #77797e;border-top:0"></div><div class="t" style="left:42.5px;top:19.5px;font-size:7.8px;color:#dadada">Beats</div><div class="abs" style="left:78px;top:4px;width:131px;height:25px;background:#000"></div><div class="t" style="left:90.5px;top:9.5px;font-size:18.4px;color:#a9b7e9;letter-spacing:1.03px">00:00:03.50</div><div class="abs" style="left:212px;top:4px;width:89px;height:25px;background:#000"></div><div class="t" style="left:240.5px;top:9.5px;font-size:18.4px;color:#a9b7e9;letter-spacing:.25px">231</div><svg class="abs" style="left:309.5px;top:13.8px" width="9" height="7" viewBox="0 0 9 7"><path d="M0 0H1.4V7H0ZM5 0V7L1.6 3.5ZM8.6 0V7L5.2 3.5Z" fill="#bebebe"/></svg><div class="abs" style="left:338.3px;top:13.8px;width:2.1px;height:7px;background:#949494"></div><div class="abs" style="left:341.3px;top:13.8px;width:2.1px;height:7px;background:#949494"></div><svg class="abs" style="left:365.5px;top:14.3px" width="4" height="6" viewBox="0 0 4 6"><path d="M4 0V6L0 3Z" fill="#c4c4c4"/></svg><div class="abs" style="left:393.5px;top:15.8px;width:3px;height:3px;border-radius:2px;background:#2b2729"></div><div class="abs" style="left:422.5px;top:17px;width:4.5px;height:1px;background:#9a9a9a"></div><div class="abs" style="left:448px;top:17px;width:7px;height:1px;background:#b4b4b4"></div><div class="abs" style="left:451px;top:14px;width:1px;height:7px;background:#b4b4b4"></div><div class="abs" style="left:467px;top:18px;width:29.5px;height:12px;background:#e7964e;border:1px solid #8a8a8a"></div><div class="t" style="left:472px;top:20.5px;font-size:7.8px;color:#6a1c10;letter-spacing:.2px">Loop</div><div class="abs" style="left:496.5px;top:18px;width:29.5px;height:12px;background:#525660;border:1px solid #77797e"></div><div class="t" style="left:501.5px;top:20.5px;font-size:7.8px;color:#dadada">Once</div></div></div><div class="t" style="left:190px;top:48.5px;font-size:9.5px;color:#d4d4d4">/</div></div><div class="abs" id="taskbar"><div class="abs" style="left:-6px;top:8px;width:34px;height:18px;background:#484848;filter:blur(5px);opacity:.75"></div><div class="abs" style="left:50px;top:10px;width:26px;height:14px;background:#2c4650;filter:blur(6px);opacity:.8"></div><div class="abs" style="left:96px;top:9px;width:30px;height:16px;background:#4a7080;filter:blur(6px);opacity:.85"></div><div class="abs" style="left:172px;top:9px;width:30px;height:16px;background:#456878;filter:blur(6px);opacity:.8"></div><div class="abs" style="left:1248px;top:10px;width:30px;height:14px;background:#3a3a3a;filter:blur(6px)"></div></div></div></body></html>
